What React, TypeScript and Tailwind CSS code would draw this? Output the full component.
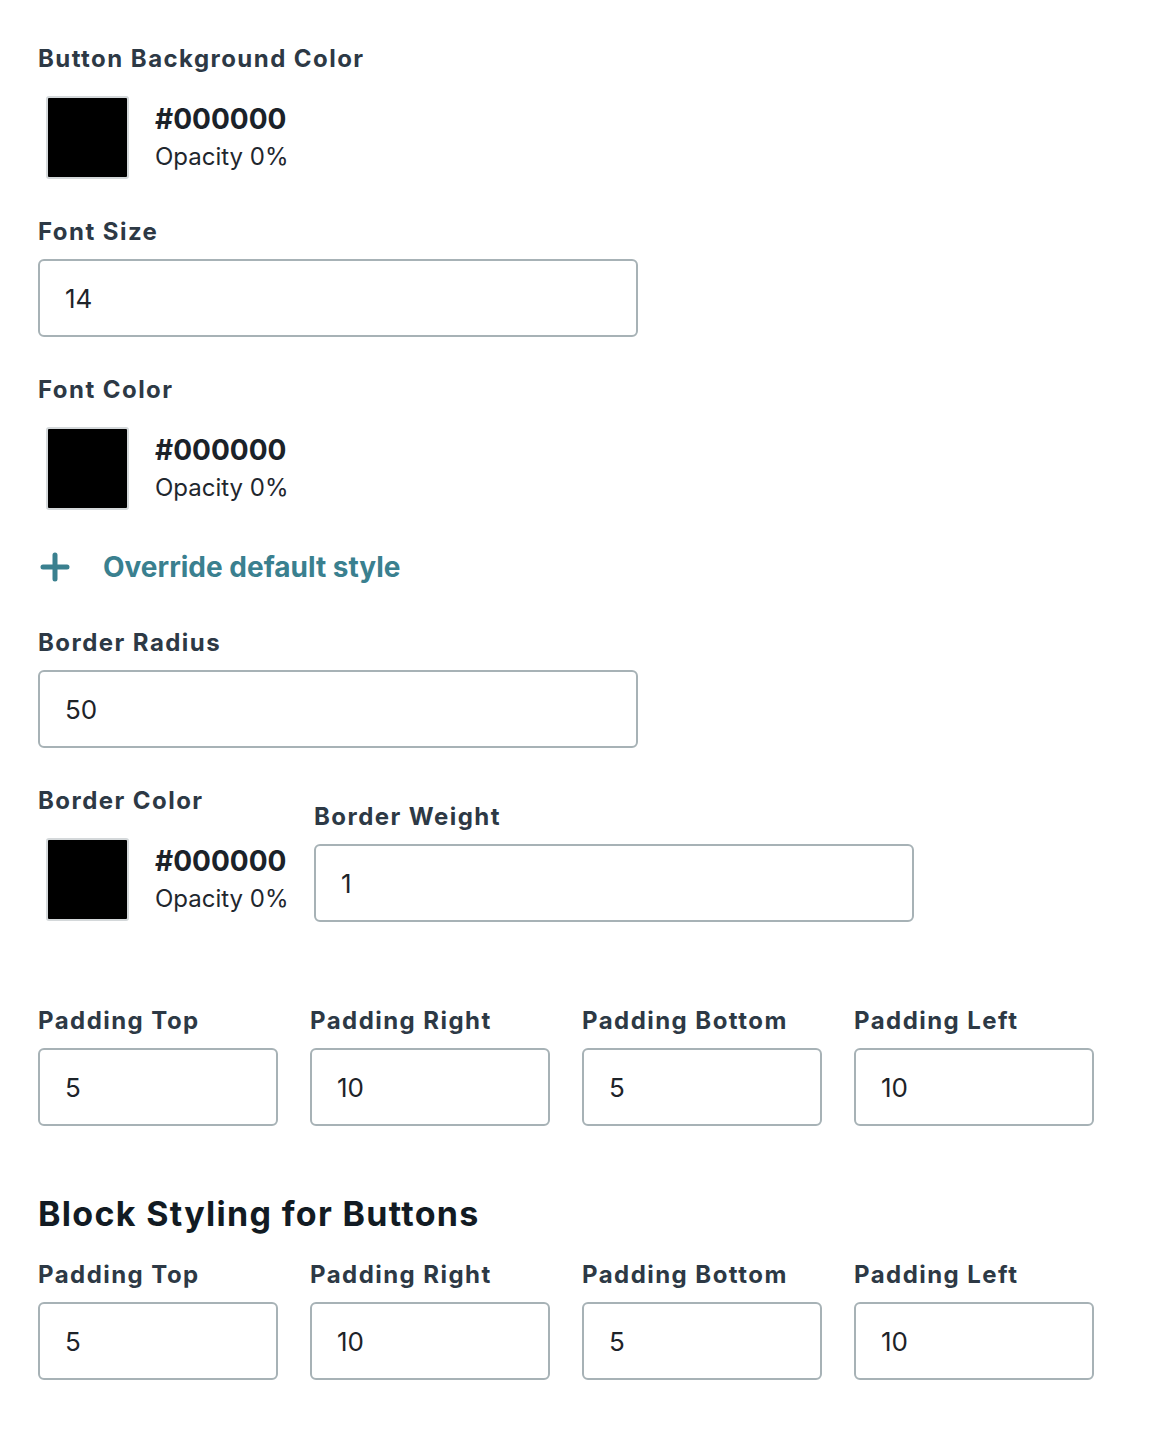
const FONT = "font-['Inter','Liberation_Sans',sans-serif]";

function Label({ children, className = '' }: { children: React.ReactNode; className?: string }) {
  return (
    <div className={`h-[29px] text-[24px] leading-[29px] font-bold tracking-[1.45px] text-[#2d3945] ${className}`}>
      {children}
    </div>
  );
}

function Field({ value, className = '' }: { value: string; className?: string }) {
  return (
    <div
      className={`h-[78px] border-2 border-[#a7b2b6] rounded-[6px] px-[25px] flex items-center text-[26px] text-[#1d2329] ${className}`}
    >
      {value}
    </div>
  );
}

function Swatch({ hex, opacity }: { hex: string; opacity: string }) {
  return (
    <div className="flex items-center">
      <div className="ml-[8px] w-[83px] h-[83px] rounded-[3px] border-2 border-[#d4d8da] bg-black" />
      <div className="ml-[26px]">
        <div className="text-[28px] leading-[38px] font-bold text-[#1b2229]">{hex}</div>
        <div className="text-[24px] leading-[38px] text-[#1f272e]">{opacity}</div>
      </div>
    </div>
  );
}

function PaddingRow({ className = '' }: { className?: string }) {
  const items = [
    { label: 'Padding Top', value: '5' },
    { label: 'Padding Right', value: '10' },
    { label: 'Padding Bottom', value: '5' },
    { label: 'Padding Left', value: '10' },
  ];
  return (
    <div className={`flex gap-[32px] ${className}`}>
      {items.map(it => (
        <div key={it.label} className="w-[240px]">
          <Label>{it.label}</Label>
          <Field value={it.value} className="mt-[13px]" />
        </div>
      ))}
    </div>
  );
}

export default function App() {
  return (
    <div className={`${FONT} bg-white w-[1150px] min-h-[1452px] pl-[38px] pt-[44px]`}>
      <Label>Button Background Color</Label>
      <div className="mt-[23px]">
        <Swatch hex="#000000" opacity="Opacity 0%" />
      </div>

      <Label className="mt-[38px]">Font Size</Label>
      <Field value="14" className="mt-[13px] w-[600px]" />

      <Label className="mt-[38px]">Font Color</Label>
      <div className="mt-[23px]">
        <Swatch hex="#000000" opacity="Opacity 0%" />
      </div>

      <button className="mt-[39px] h-[36px] flex items-center text-[#3a808f]">
        <svg width="30" height="30" viewBox="0 0 30 30" className="ml-[2px]">
          <path d="M15 3v24M3 15h24" stroke="currentColor" strokeWidth="5" strokeLinecap="round" fill="none" />
        </svg>
        <span className="ml-[33px] text-[28px] font-bold">Override default style</span>
      </button>

      <Label className="mt-[43px]">Border Radius</Label>
      <Field value="50" className="mt-[13px] w-[600px]" />

      <div className="mt-[38px] flex items-start">
        <div className="w-[276px]">
          <Label>Border Color</Label>
          <div className="mt-[23px]">
            <Swatch hex="#000000" opacity="Opacity 0%" />
          </div>
        </div>
        <div className="mt-[16px] w-[600px]">
          <Label>Border Weight</Label>
          <Field value="1" className="mt-[13px]" />
        </div>
      </div>

      <PaddingRow className="mt-[84px]" />

      <h2 className="mt-[68px] h-[40px] text-[34px] leading-[40px] font-bold tracking-[1.3px] text-[#121b23]">
        Block Styling for Buttons
      </h2>

      <PaddingRow className="mt-[26px]" />
    </div>
  );
}
